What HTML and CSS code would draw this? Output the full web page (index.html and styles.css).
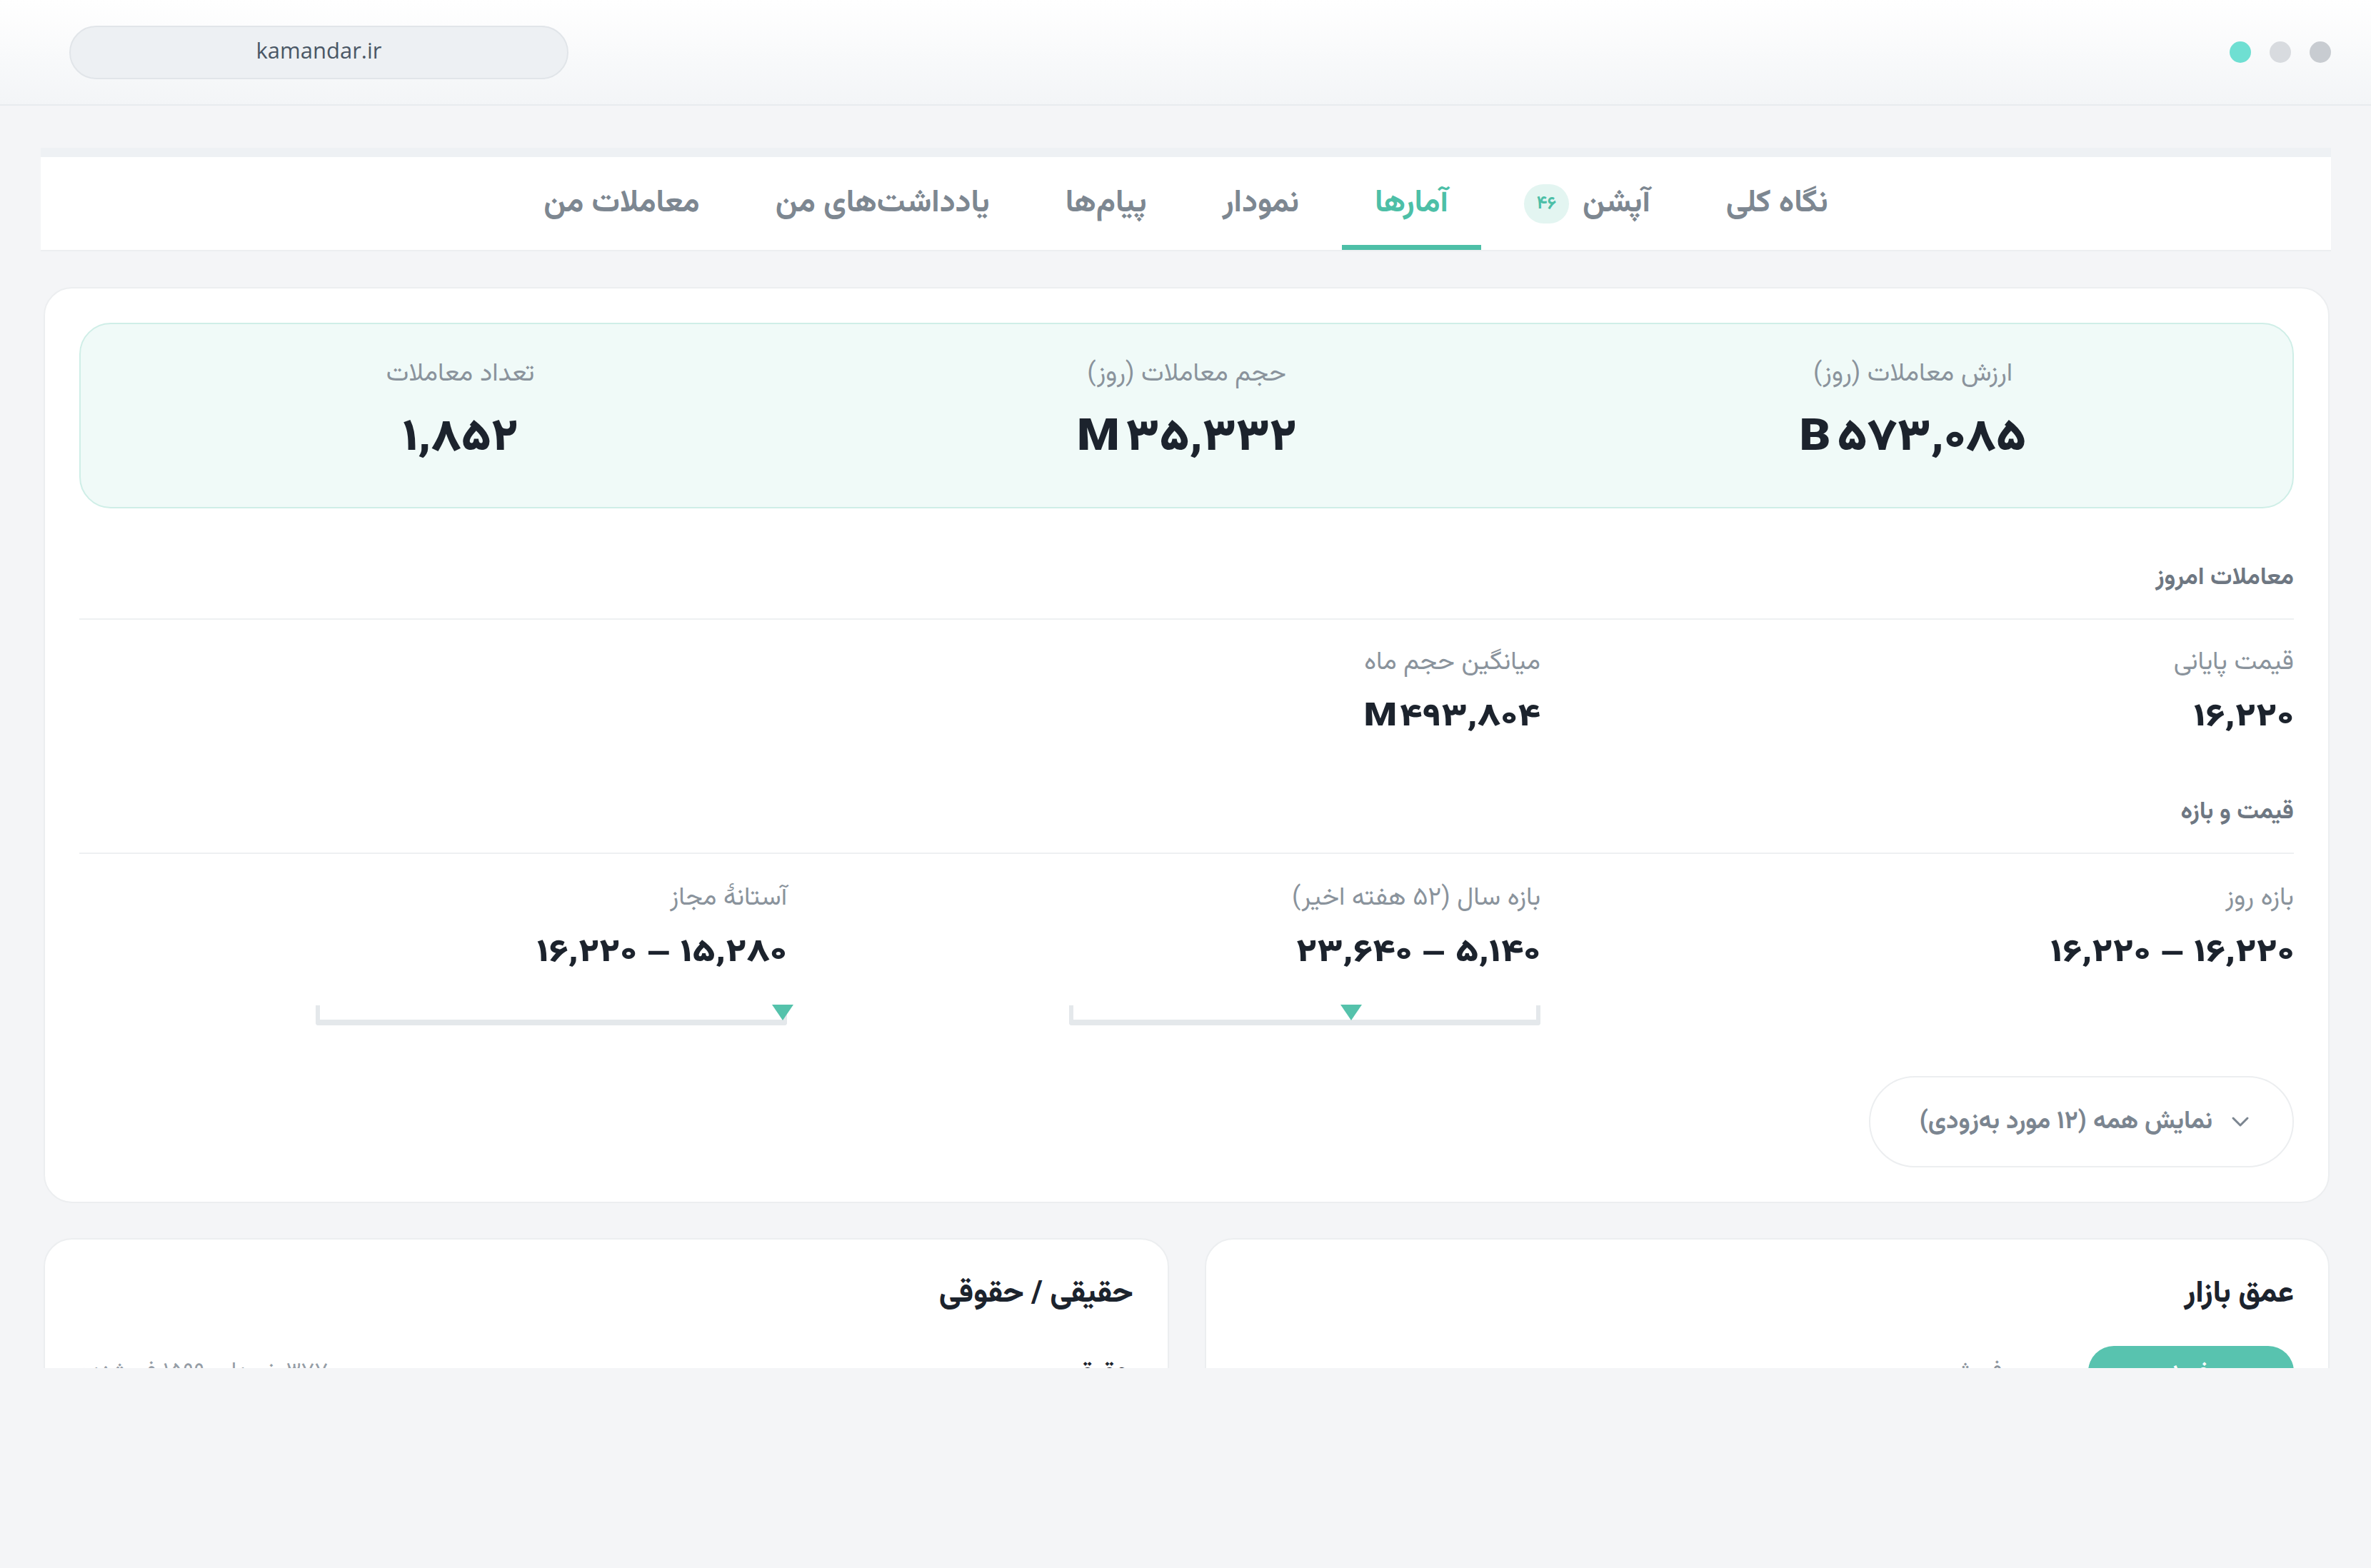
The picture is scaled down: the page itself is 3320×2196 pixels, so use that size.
FILE: index.html
```html
<!DOCTYPE html>
<html lang="fa">
<head>
<meta charset="utf-8">
<title>kamandar.ir</title>
<link rel="stylesheet" href="styles.css">
</head>
<body>
<div class="chrome">
  <div class="url">kamandar.ir</div>
  <div class="dots">
    <span class="dot dot-teal"></span>
    <span class="dot dot-light"></span>
    <span class="dot dot-mid"></span>
  </div>
</div>

<div class="viewport" dir="rtl">
  <nav class="tabs">
    <div class="tab">نگاه کلی</div>
    <div class="tab">آپشن <span class="badge">۴۶</span></div>
    <div class="tab active">آمارها</div>
    <div class="tab">نمودار</div>
    <div class="tab">پیام‌ها</div>
    <div class="tab">یادداشت‌های من</div>
    <div class="tab">معاملات من</div>
  </nav>

  <section class="card">
    <div class="stats">
      <div class="stat">
        <div class="stat-label">ارزش معاملات (روز)</div>
        <div class="stat-value"><span class="num"><span class="unit">B</span>۵۷۳,۰۸۵</span></div>
      </div>
      <div class="stat">
        <div class="stat-label">حجم معاملات (روز)</div>
        <div class="stat-value"><span class="num"><span class="unit">M</span>۳۵,۳۳۲</span></div>
      </div>
      <div class="stat">
        <div class="stat-label">تعداد معاملات</div>
        <div class="stat-value"><span class="num">۱,۸۵۲</span></div>
      </div>
    </div>

    <h3 class="sec-title">معاملات امروز</h3>
    <div class="grid">
      <div class="cell">
        <div class="label">قیمت پایانی</div>
        <div class="value"><span class="num">۱۶,۲۲۰</span></div>
      </div>
      <div class="cell">
        <div class="label">میانگین حجم ماه</div>
        <div class="value"><span class="num"><span class="unit">M</span>۴۹۳,۸۰۴</span></div>
      </div>
      <div class="cell"></div>
    </div>

    <h3 class="sec-title sec-gap">قیمت و بازه</h3>
    <div class="grid grid-range">
      <div class="cell">
        <div class="label">بازه روز</div>
        <div class="value"><span class="num">۱۶,۲۲۰ – ۱۶,۲۲۰</span></div>
      </div>
      <div class="cell">
        <div class="label">بازه سال (۵۲ هفته اخیر)</div>
        <div class="value"><span class="num">۵,۱۴۰ – ۲۳,۶۴۰</span></div>
        <div class="range"><span class="marker" style="left:60%"></span></div>
      </div>
      <div class="cell">
        <div class="label">آستانهٔ مجاز</div>
        <div class="value"><span class="num">۱۵,۲۸۰ – ۱۶,۲۲۰</span></div>
        <div class="range"><span class="marker" style="left:100%"></span></div>
      </div>
    </div>

    <button class="more" type="button">
      <svg class="chev" width="26" height="16" viewBox="0 0 26 16"><polyline points="3,3 13,13 23,3" fill="none" stroke="#7b8590" stroke-width="3" stroke-linecap="round" stroke-linejoin="round"/></svg>
      <span class="more-text">نمایش همه (۱۲ مورد به‌زودی)</span>
    </button>
  </section>

  <div class="split">
    <section class="panel">
      <h2 class="panel-title">عمق بازار</h2>
      <div class="seg">
        <span class="seg-on">خرید</span>
        <span class="seg-off">فروش</span>
      </div>
    </section>
    <section class="panel">
      <h2 class="panel-title">حقیقی / حقوقی</h2>
      <div class="row">
        <span class="row-name">حقیقی</span>
        <span class="row-meta">۳۷۷ خریدار · ۱۵۹۹ فروشنده</span>
      </div>
    </section>
  </div>
</div>
</body>
</html>
```

FILE: styles.css
```css
* { box-sizing: border-box; }

body {
  margin: 0;
  width: 3320px;
  height: 2196px;
  overflow: hidden;
  background: #f4f5f7;
  font-family: "Vazirmatn", "Noto Sans Arabic", "DejaVu Sans", sans-serif;
}

/* browser chrome */
.chrome {
  height: 148px;
  border-bottom: 2px solid #e8ebee;
  background: linear-gradient(#ffffff, #f3f5f7);
  display: flex;
  align-items: center;
  justify-content: space-between;
  padding: 0 56px 0 97px;
  direction: ltr;
}

.url {
  width: 699px;
  height: 75px;
  border: 2px solid #e1e5e9;
  border-radius: 38px;
  background: #edf0f3;
  display: flex;
  align-items: center;
  justify-content: center;
  padding-bottom: 6px;
  font-family: "Open Sans", "DejaVu Sans", sans-serif;
  font-size: 31px;
  font-weight: 500;
  color: #4a5765;
}

.dots { display: flex; gap: 26px; }
.dot { width: 30px; height: 30px; border-radius: 50%; }
.dot-teal { background: #6fdfd2; }
.dot-light { background: #d8dbdf; }
.dot-mid { background: #c8ccd1; }

/* page area */
.viewport {
  height: 1768px;
  overflow: hidden;
  padding: 59px 56px 0 57px;
}

/* tabs */
.tabs {
  background: #fff;
  border-top: 13px solid #eef1f4;
  border-bottom: 2px solid #eceef0;
  display: flex;
  justify-content: center;
  gap: 14px;
}

.tab {
  height: 130px;
  padding: 0 46px;
  display: flex;
  align-items: center;
  gap: 19px;
  font-size: 44px;
  font-weight: 700;
  color: #7d8791;
}

.tab.active {
  color: #4dbfa7;
  box-shadow: inset 0 -7px 0 #4dbfa7;
}

.badge {
  min-width: 63px;
  height: 55px;
  border-radius: 28px;
  background: #e3f5f1;
  color: #4dbfa7;
  font-size: 25px;
  display: flex;
  align-items: center;
  justify-content: center;
}

/* main card */
.card {
  margin: 50px 2px 0 4px;
  background: #fff;
  border: 2px solid #eceef0;
  border-radius: 40px;
  padding: 48px;
}

.stats {
  background: #f0faf8;
  border: 2px solid #cfeee7;
  border-radius: 44px;
  padding: 48px 23px 60px;
  display: grid;
  grid-template-columns: repeat(3, 1fr);
  text-align: center;
}

.stat-label {
  font-size: 36px;
  line-height: 44px;
  color: #8a939c;
}

/* numbers are drawn a little wider, with the figures spaced out */
.num {
  display: inline-block;
  transform-origin: right center;
  transform: scaleX(1.2);
}

.stat-value {
  margin-top: 34px;
  font-size: 62px;
  line-height: 70px;
  font-weight: 900;
  color: #1c232d;
}

.stat-value .num {
  transform-origin: center;
  transform: scaleX(1.1);
}

.unit { margin-right: 8px; }
.value .unit { margin-right: 3px; }

.sec-title {
  margin: 76px 0 0;
  padding-bottom: 34px;
  border-bottom: 2px solid #eef0f2;
  font-size: 34px;
  line-height: 44px;
  font-weight: 700;
  color: #6e7782;
}

.sec-title.sec-gap { margin-top: 82px; }

.grid {
  display: grid;
  grid-template-columns: repeat(3, 1fr);
  column-gap: 64px;
  padding-top: 38px;
}

.grid-range { padding-top: 40px; }

.label {
  font-size: 36px;
  line-height: 44px;
  color: #8a939c;
}

.value {
  margin-top: 28px;
  font-size: 44px;
  line-height: 56px;
  font-weight: 900;
  color: #1c232d;
}

.range {
  position: relative;
  margin-top: 44px;
  width: 660px;
  height: 28px;
  border: 6px solid #e4e8eb;
  border-top: none;
  border-bottom-width: 8px;
  border-radius: 0 0 4px 4px;
}

.marker {
  position: absolute;
  top: -1px;
  width: 0;
  height: 0;
  border-left: 15px solid transparent;
  border-right: 15px solid transparent;
  border-top: 22px solid #55c2ab;
  transform: translateX(-50%);
}

.more {
  margin-top: 71px;
  width: 595px;
  height: 128px;
  border: 2px solid #eceef0;
  border-radius: 64px;
  background: #fff;
  display: flex;
  align-items: center;
  gap: 26px;
  padding: 0 60px 0 20px;
  font-family: inherit;
  font-size: 35px;
  font-weight: 700;
  color: #7b8590;
}

.more-text { white-space: nowrap; }
.chev { flex: none; }

/* lower panels */
.split {
  display: grid;
  grid-template-columns: 1fr 1fr;
  gap: 50px;
  margin: 49px 2px 0 4px;
}

.panel {
  height: 420px;
  background: #fff;
  border: 2px solid #eceef0;
  border-radius: 40px;
  padding: 48px;
}

.panel-title {
  margin: 0;
  font-size: 43px;
  line-height: 58px;
  font-weight: 800;
  color: #1c232d;
}

.seg {
  margin-top: 43px;
  display: flex;
  align-items: center;
  gap: 120px;
}

.seg-on {
  width: 288px;
  height: 72px;
  border-radius: 36px;
  background: #58c3af;
  color: #fff;
  font-size: 32px;
  font-weight: 700;
  display: flex;
  align-items: center;
  justify-content: center;
}

.seg-off {
  font-size: 32px;
  color: #8a939c;
}

.row {
  margin-top: 52px;
  display: flex;
  justify-content: space-between;
  align-items: center;
}

.row-name {
  font-size: 36px;
  font-weight: 700;
  color: #1c232d;
}

.row-meta {
  font-size: 32px;
  color: #959da6;
}
```
